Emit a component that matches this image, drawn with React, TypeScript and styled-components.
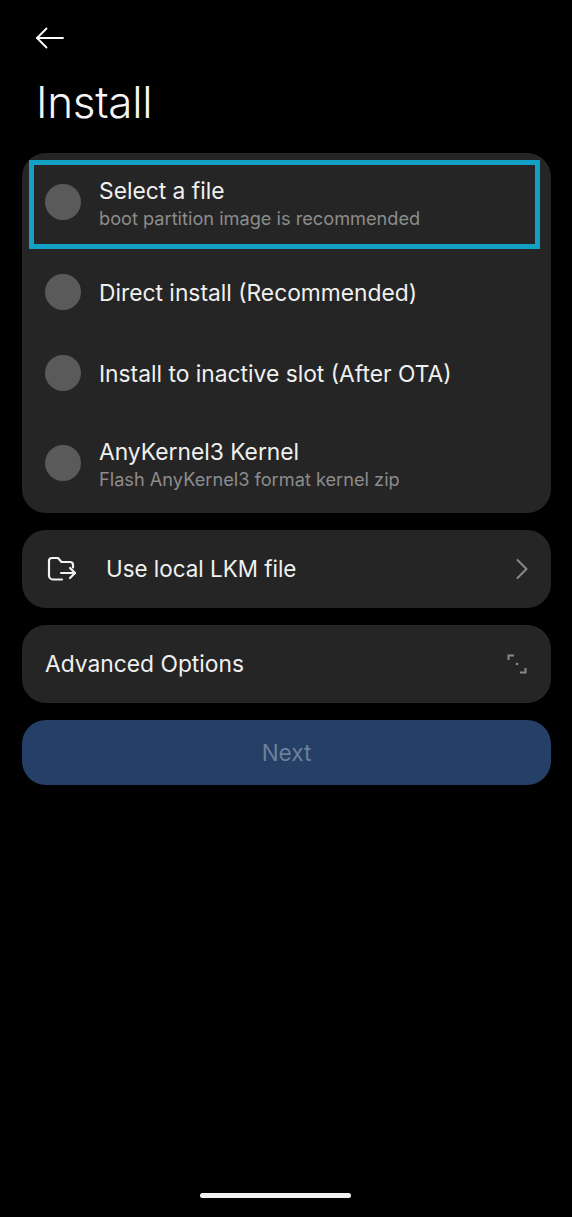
import styled, { createGlobalStyle } from 'styled-components';

const GlobalStyle = createGlobalStyle`
	html, body {
		margin: 0;
		padding: 0;
		background: #000;
	}
	body {
		font-family: 'Inter', 'Noto Sans', sans-serif;
	}
`;

const options = [
	{ title: 'Select a file', subtitle: 'boot partition image is recommended', height: 98, highlighted: true },
	{ title: 'Direct install (Recommended)', height: 82 },
	{ title: 'Install to inactive slot (After OTA)', height: 80 },
	{ title: 'AnyKernel3 Kernel', subtitle: 'Flash AnyKernel3 format kernel zip', height: 100 },
];

const App = () => {
	return (
		<Page>
			<GlobalStyle />
			<BackButton aria-label="Back">
				<svg width="30" height="22" viewBox="0 0 30 22" fill="none" stroke="#fff" strokeWidth="1.8" strokeLinecap="round" strokeLinejoin="round">
					<path d="M2 11h26" />
					<path d="M11.5 1.5 2 11l9.5 9.5" />
				</svg>
			</BackButton>
			<Title>Install</Title>
			<Content>
				<Card>
					{options.map((option) => (
						<OptionRow key={option.title} $height={option.height}>
							<Radio />
							<OptionText>
								<OptionTitle>{option.title}</OptionTitle>
								{option.subtitle && <OptionSubtitle>{option.subtitle}</OptionSubtitle>}
							</OptionText>
							{option.highlighted && <Highlight />}
						</OptionRow>
					))}
				</Card>
				<LinkCard>
					<FileIcon width="30" height="26" viewBox="0 0 30 26" fill="none" stroke="#f2f2f2" strokeWidth="2.2" strokeLinecap="round" strokeLinejoin="round">
						<path d="M15 23.5H6a4 4 0 0 1-4-4V5a3 3 0 0 1 3-3h6l3.5 4H23a3 3 0 0 1 3 3v2.5" />
						<path d="M14 17h14" />
						<path d="M23 12l5 5-5 5" />
					</FileIcon>
					<LinkLabel>Use local LKM file</LinkLabel>
					<svg width="14" height="22" viewBox="0 0 14 22" fill="none" stroke="#8a8a8a" strokeWidth="2" strokeLinecap="round" strokeLinejoin="round">
						<path d="M2.5 2 11.5 11l-9 9" />
					</svg>
				</LinkCard>
				<OptionsCard>
					<OptionTitle>Advanced Options</OptionTitle>
					<svg width="20" height="20" viewBox="0 0 20 20" fill="none" stroke="#8a8a8a" strokeWidth="2">
						<path d="M7 1.5H1.5V6" />
						<path d="M13 18.5h5.5V14" />
						<circle cx="10" cy="10" r="1.3" fill="#8a8a8a" stroke="none" />
					</svg>
				</OptionsCard>
				<NextButton>Next</NextButton>
			</Content>
			<HomeIndicator />
		</Page>
	);
};

const Page = styled.div`
	box-sizing: border-box;
	display: flex;
	flex-direction: column;
	width: 572px;
	height: 1217px;
	padding: 27px 21px 19px 22px;
	background: #000;
	color: #f2f2f2;
`;

const BackButton = styled.button`
	display: flex;
	align-self: flex-start;
	margin-left: 13px;
	padding: 0;
	border: 0;
	background: none;
`;

const Title = styled.h1`
	margin: 23px 0 21px 14px;
	font-size: 44px;
	font-weight: 300;
	line-height: 60px;
	letter-spacing: -0.3px;
	color: #f5f5f5;
`;

const Content = styled.main`
	display: flex;
	flex-direction: column;
	gap: 17px;
`;

const Card = styled.section`
	border-radius: 24px;
	background: #252525;
`;

const OptionRow = styled.div<{ $height: number }>`
	position: relative;
	display: flex;
	align-items: center;
	gap: 18px;
	height: ${({ $height }) => $height}px;
	padding: 0 23px;
`;

const Radio = styled.span`
	flex: none;
	width: 36px;
	height: 36px;
	border-radius: 50%;
	background: #5a5a5a;
`;

const OptionText = styled.div`
	padding-top: 2px;
`;

const OptionTitle = styled.div`
	font-size: 22.8px;
	line-height: 30px;
	color: #f0f0f0;
`;

const OptionSubtitle = styled.div`
	font-size: 18.2px;
	line-height: 24px;
	color: #8c8c8c;
`;

const Highlight = styled.span`
	position: absolute;
	top: 7px;
	left: 7px;
	width: 511px;
	height: 89px;
	box-sizing: border-box;
	border: 5px solid #12a0c4;
`;

const LinkCard = styled.section`
	display: flex;
	align-items: center;
	height: 78px;
	padding: 0 22px 0 25px;
	border-radius: 24px;
	background: #252525;
`;

const FileIcon = styled.svg`
	flex: none;
	margin-right: 29px;
`;

const LinkLabel = styled.div`
	flex: 1;
	font-size: 22.4px;
	line-height: 30px;
	color: #f0f0f0;
`;

const OptionsCard = styled.section`
	display: flex;
	align-items: center;
	justify-content: space-between;
	height: 78px;
	padding: 0 24px 0 23px;
	border-radius: 24px;
	background: #252525;
`;

const NextButton = styled.button`
	height: 65px;
	padding: 0;
	border: 0;
	border-radius: 24px;
	background: #253f66;
	color: #6d7f99;
	font-family: inherit;
	font-size: 22.5px;
`;

const HomeIndicator = styled.div`
	align-self: center;
	width: 151px;
	height: 5px;
	margin-top: auto;
	margin-right: 22px;
	border-radius: 3px;
	background: #f2f2f2;
`;

export default App;
